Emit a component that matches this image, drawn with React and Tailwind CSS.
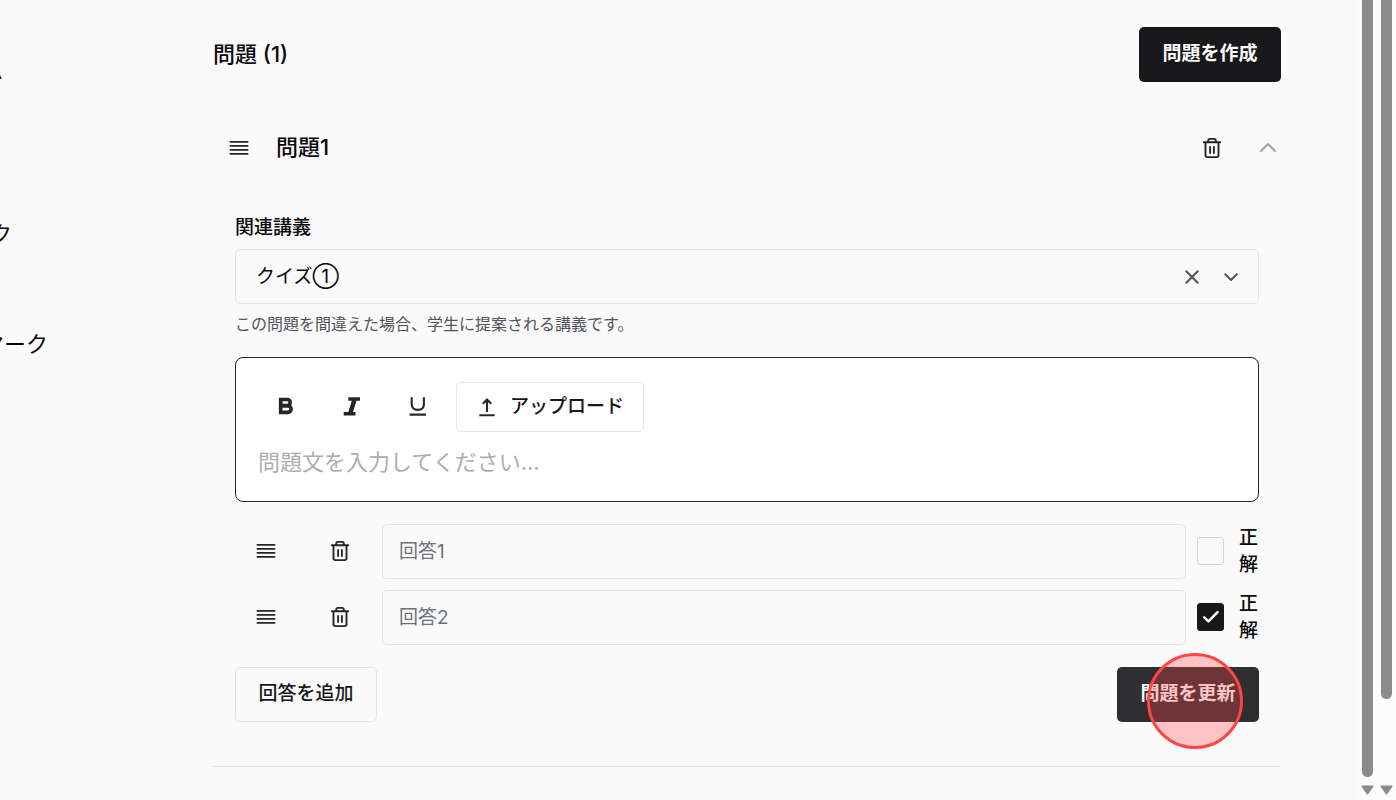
import { useState } from 'react';

// --- ICONS ---
function GripIcon() {
  return (
    <svg width="22" height="22" viewBox="0 0 22 22" fill="none" stroke="#27272a" strokeWidth="1.8" aria-hidden="true">
      <path d="M1.7 4.9h18.6M1.7 8.9h18.6M1.7 12.9h18.6M1.7 16.9h18.6" />
    </svg>
  );
}

function TrashIcon() {
  return (
    <svg width="22" height="22" viewBox="0 0 22 22" fill="none" stroke="#27272a" strokeWidth="1.9" strokeLinecap="round" strokeLinejoin="round" aria-hidden="true">
      <path d="M2.8 5.3h16.4M7.2 5V3.6c0-.9.7-1.7 1.7-1.7h4.2c1 0 1.7.8 1.7 1.7V5M4.500 5.500v12.800c0 1 .8 1.800 1.800 1.800h9.400c1 0 1.800-.8 1.800-1.800V5.500M9.100 10v6M12.900 10v6" />
    </svg>
  );
}

function BoldIcon() {
  return (
    <svg width="22" height="22" viewBox="0 0 22 22" fill="none" stroke="#27272a" strokeWidth="3.7" aria-hidden="true">
      <path d="M5.700 4.500h6.400a3 3 0 0 1 0 6.100H5.700zM5.700 10.900h7.200a3.200 3.200 0 0 1 0 6.400H5.700z" />
    </svg>
  );
}

function ItalicIcon() {
  return (
    <svg width="22" height="22" viewBox="0 0 22 22" fill="#27272a" aria-hidden="true">
      <path d="M7.300 2.200h11.700v3.500h-3.500L12 16.900h2.500v3.500H2.700v-3.500h4.600l3.500-11.200H7.300z" />
    </svg>
  );
}

function UnderlineIcon() {
  return (
    <svg width="22" height="22" viewBox="0 0 22 22" fill="none" stroke="#27272a" strokeWidth="2.100" aria-hidden="true">
      <path d="M4.700 2.200v7c0 3.700 2.400 5.700 6.100 5.700s6.100-2 6.100-5.700v-7M2.600 19.600h16.400" />
    </svg>
  );
}

function UploadIcon() {
  return (
    <svg width="22" height="22" viewBox="0 0 22 22" fill="none" stroke="#27272a" strokeWidth="2.100" aria-hidden="true">
      <path d="M11 16V3.800M6.800 7.800L11 3.600l4.200 4.200M3.300 19.200h15.400" />
    </svg>
  );
}

function ChevronUpIcon() {
  return (
    <svg width="22" height="22" viewBox="0 0 22 22" fill="none" stroke="#a1a1aa" strokeWidth="2.100" strokeLinecap="round" strokeLinejoin="round" aria-hidden="true">
      <path d="M4 14l7-7 7 7" />
    </svg>
  );
}

function ChevronDownIcon() {
  return (
    <svg width="22" height="22" viewBox="0 0 22 22" fill="none" stroke="#52525b" strokeWidth="2" strokeLinecap="round" strokeLinejoin="round" aria-hidden="true">
      <path d="M5.200 8.200l5.800 5.800 5.800-5.800" />
    </svg>
  );
}

function CloseIcon() {
  return (
    <svg width="22" height="22" viewBox="0 0 22 22" fill="none" stroke="#52525b" strokeWidth="2" strokeLinecap="round" aria-hidden="true">
      <path d="M5.300 5.300l11.400 11.400M16.700 5.300L5.300 16.700" />
    </svg>
  );
}

// --- SIDEBAR ---
function Sidebar() {
  return (
    <nav className="w-[213px] shrink-0 pt-[54px] text-[22px] leading-8">
      <a href="#team" className="flex w-[3px] justify-end whitespace-nowrap">ム</a>
      <a href="#work" className="mt-[132px] flex w-3 justify-end whitespace-nowrap">ク</a>
      <a href="#mark" className="mt-[78px] flex w-12 justify-end whitespace-nowrap">マーク</a>
    </nav>
  );
}

// --- ANSWER ROW ---
function AnswerRow({ index, answer, onToggle, onRemove }) {
  return (
    <div className="flex items-start gap-[11px]">
      <div className="flex gap-3">
        <button type="button" aria-label="並べ替え" className="flex h-[54px] w-[62px] items-center justify-center">
          <GripIcon />
        </button>
        <button type="button" aria-label="回答を削除" onClick={onRemove} className="flex h-[54px] w-[62px] items-center justify-center">
          <TrashIcon />
        </button>
      </div>
      <input
        type="text"
        aria-label={`回答${index}`}
        placeholder={`回答${index}`}
        className="h-[55px] min-w-0 flex-1 rounded-[5px] border border-[#e4e4e7] bg-transparent px-4 placeholder:text-[#71717a]"
      />
      <label className="flex items-center gap-[15px] font-medium leading-[27px]">
        <span className="grid">
          <input
            type="checkbox"
            checked={answer.correct}
            onChange={onToggle}
            className="peer col-start-1 row-start-1 h-7 w-[27px] appearance-none rounded-[3px] border border-[#d4d4d8] checked:border-[#18181b] checked:bg-[#18181b]"
          />
          <svg width="27" height="28" viewBox="0 0 27 28" fill="none" stroke="#fff" strokeWidth="2.500" strokeLinecap="round" strokeLinejoin="round" className="pointer-events-none invisible col-start-1 row-start-1 peer-checked:visible" aria-hidden="true">
            <path d="M7.200 14.400l4.200 4 9.200-9.200" />
          </svg>
        </span>
        <span className="w-5">正解</span>
      </label>
    </div>
  );
}

// --- QUESTION FORM ---
function QuestionForm() {
  const [answers, setAnswers] = useState([
    { id: 1, correct: false },
    { id: 2, correct: true },
  ]);

  const toggle = (id) => setAnswers(answers.map(a => (a.id === id ? { ...a, correct: !a.correct } : a)));
  const remove = (id) => setAnswers(answers.filter(a => a.id !== id));
  const add = () => setAnswers([...answers, { id: Date.now(), correct: false }]);

  return (
    <form onSubmit={e => e.preventDefault()} className="px-[22px] pt-[39px] pb-11 text-[19px]">
      <label htmlFor="lecture" className="block font-medium leading-[27px]">関連講義</label>
      <div className="mt-2 flex h-[55px] items-center rounded-[5px] border border-[#e4e4e7] pr-4">
        <select id="lecture" className="h-full flex-1 appearance-none bg-transparent pl-5 leading-[27px]">
          <option>クイズ①</option>
        </select>
        <button type="button" aria-label="クリア" className="mr-[17px]"><CloseIcon /></button>
        <ChevronDownIcon />
      </div>
      <p className="mt-2 text-[16px] leading-6 text-[#52525b]">この問題を間違えた場合、学生に提案される講義です。</p>

      {/* Editor */}
      <div className="mt-[21px] rounded-lg border border-[#27272a] bg-white px-[22px] pt-6 pb-[22px]">
        <div className="flex items-start gap-[11px]">
          <button type="button" aria-label="太字" className="flex h-12 w-[55px] items-center justify-center"><BoldIcon /></button>
          <button type="button" aria-label="斜体" className="flex h-12 w-[55px] items-center justify-center"><ItalicIcon /></button>
          <button type="button" aria-label="下線" className="flex h-12 w-[55px] items-center justify-center"><UnderlineIcon /></button>
          <button type="button" className="flex h-[50px] items-center gap-3 rounded-[5px] border border-[#e4e4e7] px-[19px] font-medium text-[#18181b]">
            <UploadIcon />
            アップロード
          </button>
        </div>
        <textarea
          rows={1}
          aria-label="問題文"
          placeholder="問題文を入力してください..."
          className="mt-3.5 block h-[33px] w-full resize-none overflow-hidden text-[22px] leading-[33px] placeholder:text-[#adadad]"
        />
      </div>

      {/* Answers */}
      <div className="mt-[22px] flex flex-col gap-[11px]">
        {answers.map((a, i) => (
          <AnswerRow key={a.id} index={i + 1} answer={a} onToggle={() => toggle(a.id)} onRemove={() => remove(a.id)} />
        ))}
      </div>

      <div className="mt-[22px] flex justify-between">
        <button type="button" onClick={add} className="h-[55px] w-[142px] rounded-[5px] border border-[#e4e4e7] font-medium text-[#18181b]">
          回答を追加
        </button>
        <button type="submit" className="relative h-[55px] w-[142px] rounded-[5px] bg-[#2f2f31] font-semibold text-[#fafafa]">
          問題を更新
          {/* Click marker */}
          <span className="pointer-events-none absolute -top-3.5 left-[30px] size-24 rounded-full border-3 border-[#ff4444] bg-[#ff4444]/30" />
        </button>
      </div>
    </form>
  );
}

// --- SCROLLBAR ---
function Scrollbar({ children }) {
  return (
    <div className="flex w-[19px] shrink-0 flex-col items-center bg-[#fcfcfc] pb-[5px]">
      <div className="flex w-[11px] flex-1 flex-col">{children}</div>
      <svg width="13" height="10" viewBox="0 0 13 10" className="mt-2" fill="#8b8b8b" stroke="#8b8b8b" strokeWidth="1.500" strokeLinejoin="round" aria-hidden="true">
        <path d="M1.200 1.200h10.600L6.500 8.800z" />
      </svg>
    </div>
  );
}

export default function App() {
  const [open, setOpen] = useState(true);

  return (
    <div className="flex h-screen overflow-hidden bg-[#fafafa] font-['Inter','Noto_Sans_CJK_JP',sans-serif] text-[#09090b]">
      <Sidebar />

      <main className="min-w-0 flex-1 pt-[27px] pr-[77px]">
        <header className="flex h-[55px] items-center justify-between">
          <h1 className="text-[22px] font-medium">問題 (1)</h1>
          <button type="button" className="h-[55px] w-[142px] rounded-[5px] bg-[#18181b] text-[19px] font-semibold text-[#fafafa]">
            問題を作成
          </button>
        </header>

        <section className="mt-[38px] border-b border-[#e4e4e7]">
          <div className="flex h-[55px] items-center pl-[15px]">
            <button type="button" aria-label="並べ替え"><GripIcon /></button>
            <h2 className="ml-[26px] flex-1 text-[22px] font-medium">問題1</h2>
            <button type="button" aria-label="問題を削除" className="mr-[34px]"><TrashIcon /></button>
            <button type="button" aria-label="開閉" onClick={() => setOpen(!open)} className={open ? 'mr-0.5' : 'mr-0.5 rotate-180'}>
              <ChevronUpIcon />
            </button>
          </div>
          {open && <QuestionForm />}
        </section>
      </main>

      <Scrollbar>
        <div className="h-full rounded-b-full bg-[#8b8b8b]" />
      </Scrollbar>
      <Scrollbar>
        <div className="h-[90%] rounded-b-full bg-[#8b8b8b]" />
      </Scrollbar>
    </div>
  );
}
